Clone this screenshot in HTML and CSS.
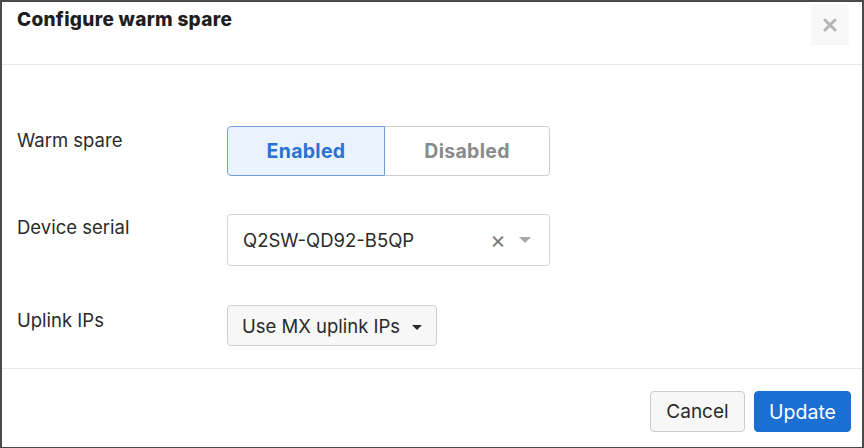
FILE: index.html
```html
<!DOCTYPE html>
<html>
<head>
<meta charset="utf-8">
<link rel="stylesheet" href="styles.css">
</head>
<body>
<div class="modal">
  <header class="modal-header">
    <h1 class="title">Configure warm spare</h1>
    <button class="close-btn" aria-label="Close">
      <svg width="14" height="14" viewBox="0 0 14 14"><path d="M2 2L12 12M12 2L2 12" stroke="#b5b5b5" stroke-width="3" stroke-linecap="round"/></svg>
    </button>
  </header>
  <main class="modal-body">
    <div class="row row-spare">
      <div class="label">Warm spare</div>
      <div class="segmented">
        <button class="seg seg-active">Enabled</button>
        <button class="seg">Disabled</button>
      </div>
    </div>
    <div class="row row-serial">
      <div class="label">Device serial</div>
      <div class="select">
        <span class="select-value">Q2SW-QD92-B5QP</span>
        <span class="select-clear">×</span>
        <span class="caret caret-light"></span>
      </div>
    </div>
    <div class="row row-uplink">
      <div class="label">Uplink IPs</div>
      <button class="dropdown">Use MX uplink IPs <span class="caret caret-dark"></span></button>
    </div>
  </main>
  <footer class="modal-footer">
    <button class="btn btn-default">Cancel</button>
    <button class="btn btn-primary">Update</button>
  </footer>
</div>
</body>
</html>
```

FILE: styles.css
```css
* { box-sizing: border-box; }
html, body { margin: 0; padding: 0; }
body {
  width: 864px;
  height: 448px;
  background: #fff;
  font-family: Inter, "Liberation Sans", sans-serif;
  color: #2a2a2a;
  overflow: hidden;
}
.modal {
  width: 864px;
  height: 448px;
  border: 2px solid #4a4a4a;
  border-bottom-width: 1px;
  display: flex;
  flex-direction: column;
}
.modal-header {
  height: 63px;
  border-bottom: 1px solid #e6e6e6;
  display: flex;
  justify-content: space-between;
  align-items: flex-start;
  padding: 0 13px 0 15px;
}
.title {
  margin: 6px 0 0;
  font-family: Inter, sans-serif;
  font-weight: 800;
  font-size: 19px;
  letter-spacing: 0.3px;
  color: #1e1e1e;
}
.close-btn {
  margin-top: 3px;
  width: 38px;
  height: 40px;
  border: none;
  background: #f8f8f8;
  display: flex;
  align-items: center;
  justify-content: center;
  padding: 0;
}
.modal-body {
  flex: 1;
  padding: 60px 0 0 15px;
  display: flex;
  flex-direction: column;
}
.row {
  display: flex;
  align-items: center;
}
.label {
  width: 210px;
  font-size: 18.5px;
  color: #2a2a2a;
}
.row-spare { height: 50px; margin-top: 1px; }
.row-spare .label { margin-top: -23px; }
.segmented {
  display: flex;
  height: 50px;
}
.seg {
  font-family: Inter, sans-serif;
  font-weight: 700;
  font-size: 19.5px;
  letter-spacing: 0.3px;
  background: #fff;
  color: #8a8a8a;
  border: 1px solid #cfcfcf;
  border-left: none;
  border-radius: 0 4px 4px 0;
  width: 165px;
  padding: 0;
}
.seg-active {
  width: 158px;
  background: #eaf3fd;
  color: #2c72d2;
  border: 1px solid #6f9ed8;
  border-radius: 4px 0 0 4px;
}
.row-serial { margin-top: 38px; }
.row-serial .label { margin-top: -27px; }
.select {
  width: 323px;
  height: 52px;
  border: 1px solid #d4d4d4;
  border-radius: 4px;
  display: flex;
  align-items: center;
  padding: 0 18px 0 15px;
}
.select-value {
  flex: 1;
  font-size: 18.5px;
  color: #2a2a2a;
}
.select-clear {
  font-size: 24px;
  color: #7a7a7a;
  margin-right: 13px;
  line-height: 1;
}
.caret {
  display: inline-block;
  width: 0;
  height: 0;
  border-left: 6px solid transparent;
  border-right: 6px solid transparent;
  border-top: 6px solid #a8a8a8;
}
.caret-dark {
  border-left-width: 5px;
  border-right-width: 5px;
  border-top: 5px solid #2a2a2a;
  margin-left: 7px;
  vertical-align: middle;
}
.row-uplink { margin-top: 39px; }
.row-uplink .label { margin-top: -11px; }
.dropdown {
  height: 41px;
  padding: 0 14px 0 14px;
  background: #f7f7f7;
  border: 1px solid #d0d0d0;
  border-radius: 4px;
  font-family: Inter, sans-serif;
  font-size: 18.5px;
  color: #2a2a2a;
}
.modal-footer {
  height: 79px;
  border-top: 1px solid #e6e6e6;
  display: flex;
  justify-content: flex-end;
  align-items: flex-start;
  gap: 9px;
  padding: 22px 11px 0 0;
}
.btn {
  height: 41px;
  font-family: Inter, sans-serif;
  font-size: 19px;
  border-radius: 4px;
  padding: 0;
}
.btn-default {
  width: 95px;
  background: #f7f7f7;
  border: 1px solid #cccccc;
  color: #2a2a2a;
}
.btn-primary {
  width: 97px;
  background: #1b6fd3;
  border: 1px solid #1b6fd3;
  color: #fff;
  font-size: 19.5px;
}
```
